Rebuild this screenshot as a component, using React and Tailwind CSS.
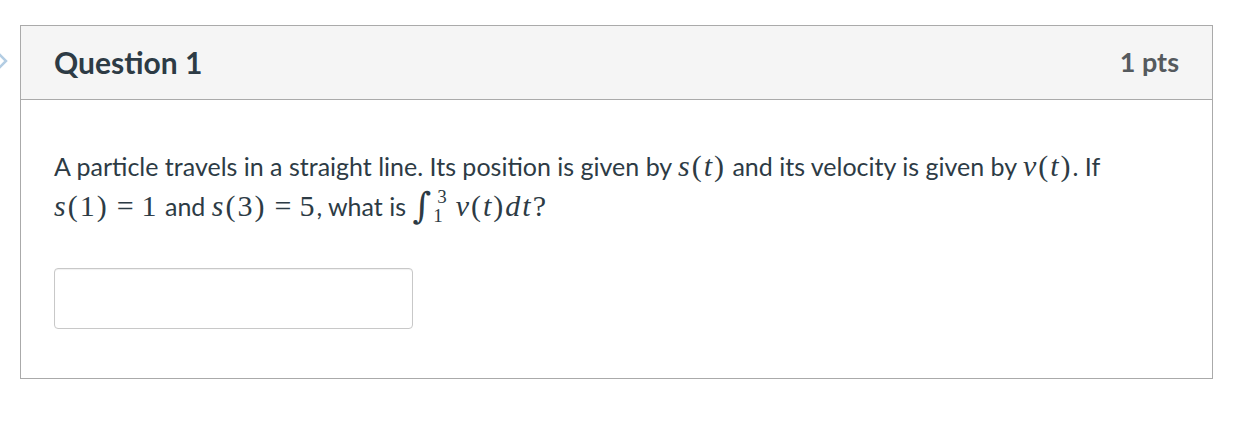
export default function App() {
  const math = "font-['Liberation_Serif',serif] italic text-[30px] tracking-[2px]"
  const up = "font-['Liberation_Serif',serif] not-italic text-[30px] tracking-[2px]"
  const rel = "mx-[8px] font-['Liberation_Serif',serif] not-italic text-[30px]"
  return (
    <div className="relative min-h-[422px] w-[1234px] bg-white pt-[25px] pl-[20px] font-['Lato',sans-serif] text-[#2d3b45]">
      {/* cut-off chevron at the left edge */}
      <svg className="absolute left-[-6px] top-[50px]" width="16" height="22" viewBox="0 0 16 22">
        <path d="M3 2 L12 11 L3 20" fill="none" stroke="#b3cde3" strokeWidth="2.5" />
      </svg>

      <div className="w-[1193px] border border-[#aaaaaa]">
        <div className="flex h-[74px] items-center justify-between border-b border-[#aaaaaa] bg-[#f5f5f5] px-[33px]">
          <h2 className="text-[30px] font-bold">Question 1</h2>
          <span className="text-[27px] font-bold text-[#555a5e]">1 pts</span>
        </div>

        <div className="px-[33px] pt-[46px] pb-[49px]">
          <p className="text-[25px] leading-[40px]">
            A particle travels in a straight line. Its position is given by{' '}
            <span className={math}>s</span><span className={up}>(</span><span className={math}>t</span><span className={up}>)</span>{' '}
            and its velocity is given by{' '}
            <span className={math}>v</span><span className={up}>(</span><span className={math}>t</span><span className={up}>)</span>. If
            <br />
            <span className={math}>s</span><span className={up}>(1)</span><span className={rel}>=</span><span className={up}>1</span> and{' '}
            <span className={math}>s</span><span className={up}>(3)</span><span className={rel}>=</span><span className={up}>5</span>, what is{' '}
            <span className="inline-flex h-[40px] items-center align-top">
              <span className="font-['DejaVu_Serif',serif] text-[36px] leading-none">∫</span>
              <span className="ml-[2px] mr-[9px] flex flex-col font-['Liberation_Serif',serif] text-[19px] leading-[19px]">
                <span className="pl-[4px]">3</span>
                <span>1</span>
              </span>
            </span>
            <span className={math}>v</span><span className={up}>(</span><span className={math}>t</span><span className={up}>)</span>
            <span className={math}>dt</span><span className={up}>?</span>
          </p>

          <div className="mt-[42px] h-[61px] w-[359px] rounded-[4px] border border-[#c8c8c8] bg-white shadow-[inset_0_1px_1px_rgba(0,0,0,0.06)]" />
        </div>
      </div>
    </div>
  )
}
